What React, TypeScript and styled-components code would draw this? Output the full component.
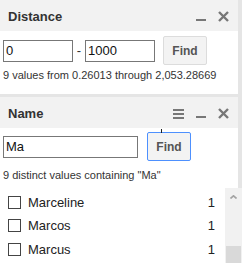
import React from "react";
import styled, { createGlobalStyle } from "styled-components";

const Global = createGlobalStyle`
  html, body { margin: 0; padding: 0; background: #e5e5e5; }
  body { font-family: "Liberation Sans", Arial, sans-serif; overflow: hidden; }
  * { box-sizing: border-box; }
`;

const Page = styled.div`
  width: 242px;
  height: 263px;
  display: flex;
  flex-direction: column;
  gap: 3px;
  overflow: hidden;
`;

const Panel = styled.section<{ $grow?: boolean }>`
  width: 238px;
  background: #fff;
  display: flex;
  flex-direction: column;
  ${(p) => (p.$grow ? "flex: 1; min-height: 0;" : "")}
`;

const Header = styled.header`
  height: 31px;
  background: #f2f2f2;
  display: flex;
  align-items: center;
  padding: 2px 9px 0 8px;
`;

const Title = styled.h2`
  margin: 0;
  flex: 1;
  font-size: 13px;
  font-weight: bold;
  color: #333;
`;

const Icons = styled.div`
  display: flex;
  align-items: center;
  gap: 12px;
`;

const IconSvg = styled.svg`
  display: block;
  fill: #777;
  stroke: #777;
`;

const Content = styled.div<{ $pt: number; $pb: number }>`
  position: relative;
  padding: ${(p) => p.$pt}px 0 ${(p) => p.$pb}px 3px;
  display: flex;
  flex-direction: column;
  min-height: 0;
  flex: 1;
`;

const SearchRow = styled.div`
  display: flex;
  align-items: center;
  height: 29px;
`;

const Input = styled.input<{ $w: number }>`
  width: ${(p) => p.$w}px;
  height: 22px;
  border: 1px solid #777;
  border-radius: 0;
  padding: 0 0 0 2px;
  margin: 0;
  font-family: "Liberation Sans", Arial, sans-serif;
  font-size: 13px;
  color: #111;
  background: #fff;
  outline: none;
`;

const Dash = styled.span`
  width: 12px;
  text-align: center;
  font-size: 13px;
  color: #333;
`;

const FindButton = styled.button<{ $gap: number; $focus?: boolean }>`
  margin: 0 0 0 ${(p) => p.$gap}px;
  width: 44px;
  height: 29px;
  padding: 0;
  background: #f3f3f3;
  border: 1px solid ${(p) => (p.$focus ? "#4d90fe" : "#dcdcdc")};
  border-radius: 2px;
  font-family: "Liberation Sans", Arial, sans-serif;
  font-size: 12px;
  font-weight: bold;
  color: #555;
`;

const Info = styled.div<{ $mt: number }>`
  margin-top: ${(p) => p.$mt}px;
  font-size: 11px;
  line-height: 13px;
  color: #333;
  white-space: nowrap;
`;

const Caret = styled.div`
  position: absolute;
  left: 161px;
  top: 1px;
  width: 1px;
  height: 4px;
  background: #222;
`;

const ListArea = styled.div`
  margin: 6px -4px 0 -3px;
  flex: 1;
  min-height: 0;
  display: flex;
`;

const Rows = styled.ul`
  list-style: none;
  margin: 0;
  padding: 2.5px 10px 0 0;
  width: 225px;
`;

const Row = styled.li`
  height: 23.5px;
  display: flex;
  align-items: center;
  font-size: 13px;
  color: #222;
`;

const Check = styled.span`
  width: 13px;
  height: 13px;
  border: 1px solid #444;
  margin: 0 7px 0 8px;
  flex: none;
`;

const Label = styled.span`
  flex: 1;
`;

const Count = styled.span`
  text-align: right;
`;

const Scrollbar = styled.div`
  width: 17px;
  background: #f1f1f1;
  display: flex;
  flex-direction: column;
  align-items: center;
`;

const ArrowUp = styled.svg`
  display: block;
  margin-top: 7px;
  fill: none;
  stroke: #a3a3a3;
  stroke-width: 1.6;
`;

const Thumb = styled.div`
  margin-top: 47px;
  width: 15px;
  flex: 1;
  background: #d9d9d9;
`;

const Minimize = () => (
  <IconSvg width="10" height="11" viewBox="0 0 10 11">
    <rect x="0" y="8" width="10" height="2" stroke="none" />
  </IconSvg>
);

const Close = () => (
  <IconSvg width="11" height="11" viewBox="0 0 11 11">
    <path d="M1 1 L10 10 M10 1 L1 10" strokeWidth="2.4" fill="none" />
  </IconSvg>
);

const Menu = () => (
  <IconSvg width="11" height="11" viewBox="0 0 11 11">
    <rect x="0" y="1" width="11" height="2" stroke="none" />
    <rect x="0" y="5" width="11" height="2" stroke="none" />
    <rect x="0" y="9" width="11" height="2" stroke="none" />
  </IconSvg>
);

const names = ["Marceline", "Marcos", "Marcus"];

export default function App() {
  return (
    <>
      <Global />
      <Page>
        <Panel>
          <Header>
            <Title>Distance</Title>
            <Icons>
              <Minimize />
              <Close />
            </Icons>
          </Header>
          <Content $pt={5} $pb={12}>
            <SearchRow>
              <Input $w={70} defaultValue="0" />
              <Dash>-</Dash>
              <Input $w={70} defaultValue="1000" />
              <FindButton $gap={8}>Find</FindButton>
            </SearchRow>
            <Info $mt={4}>9 values from 0.26013 through 2,053.28669</Info>
          </Content>
        </Panel>
        <Panel $grow>
          <Header>
            <Title>Name</Title>
            <Icons>
              <Menu />
              <Minimize />
              <Close />
            </Icons>
          </Header>
          <Content $pt={4} $pb={0}>
            <Caret />
            <SearchRow>
              <Input $w={135} defaultValue="Ma" />
              <FindButton $gap={9} $focus>
                Find
              </FindButton>
            </SearchRow>
            <Info $mt={8}>9 distinct values containing "Ma"</Info>
            <ListArea>
              <Rows>
                {names.map((n) => (
                  <Row key={n}>
                    <Check />
                    <Label>{n}</Label>
                    <Count>1</Count>
                  </Row>
                ))}
              </Rows>
              <Scrollbar>
                <ArrowUp width="7" height="4" viewBox="0 0 7 4">
                  <path d="M0.5 3.5 L3.5 0.8 L6.5 3.5" />
                </ArrowUp>
                <Thumb />
              </Scrollbar>
            </ListArea>
          </Content>
        </Panel>
      </Page>
    </>
  );
}
